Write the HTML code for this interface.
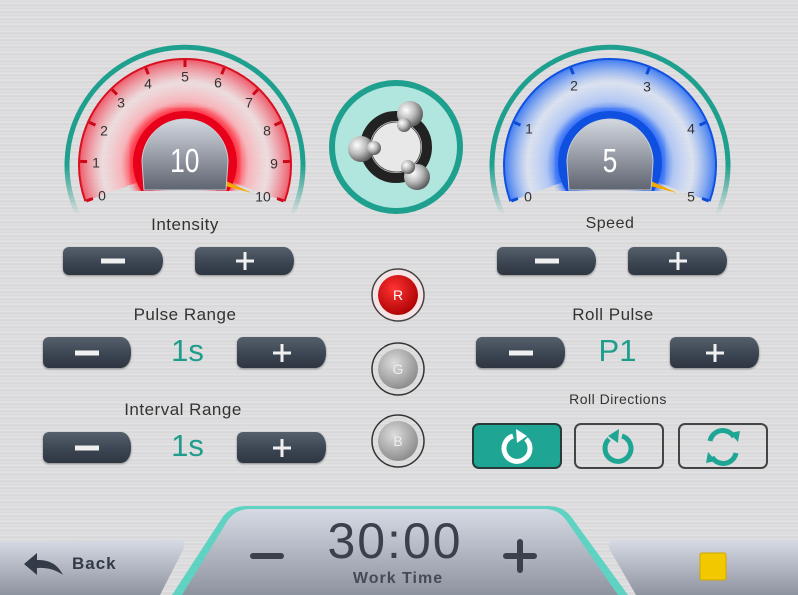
<!DOCTYPE html>
<html><head><meta charset="utf-8"><style>
*{margin:0;padding:0;box-sizing:border-box}
body{width:798px;height:595px;overflow:hidden;position:relative;font-family:"Liberation Sans",sans-serif;
background:repeating-linear-gradient(180deg,#e2e2e3 0px,#d8d8da 2px,#e6e6e7 3px,#d6d6d8 5px,#dfdfe0 7px);}
.btn{position:absolute;background:linear-gradient(#56606c,#3a4350 60%,#2e3641);border-radius:6px 10px 10px 6px/6px 14px 14px 6px;box-shadow:0 1px 2px rgba(0,0,0,.4);}
.btn span{position:absolute;left:50%;top:50%;background:#f0f0f0;transform:translate(-50%,-50%);}
.lbl{position:absolute;color:#333;font-size:17px;text-align:center;letter-spacing:.5px}
.val{position:absolute;color:#1f9d8c;font-size:31px;text-align:center}
.rd{position:absolute;width:90px;height:46px;border:2px solid #444;border-radius:7px}
</style></head><body>

<svg width="798" height="595" style="position:absolute;left:0;top:0">
<defs>
<radialGradient id="rg" cx="185" cy="165" r="106" gradientUnits="userSpaceOnUse">
<stop offset="0.45" stop-color="#ff2030"/><stop offset="0.6" stop-color="#f6b4ba"/><stop offset="0.78" stop-color="#f2dcdd" stop-opacity=".7"/><stop offset="1" stop-color="#ee5868"/></radialGradient>
<radialGradient id="bg2" cx="610" cy="165" r="106" gradientUnits="userSpaceOnUse">
<stop offset="0.45" stop-color="#1a5ee8"/><stop offset="0.6" stop-color="#b0c6f4"/><stop offset="0.78" stop-color="#dae3f5" stop-opacity=".7"/><stop offset="1" stop-color="#3d7af0"/></radialGradient>
<linearGradient id="dome" x1="0" y1="0" x2="0" y2="1"><stop offset="0" stop-color="#d4d8e0"/><stop offset="1" stop-color="#5e6470"/></linearGradient>
<linearGradient id="tf" x1="0" y1="0" x2="0" y2="1"><stop offset="0.7" stop-color="#1fa08e"/><stop offset="1" stop-color="#1fa08e" stop-opacity="0"/></linearGradient>
<radialGradient id="ball" cx="0.35" cy="0.35" r="0.7"><stop offset="0" stop-color="#fff"/><stop offset="0.5" stop-color="#bbb"/><stop offset="1" stop-color="#555"/></radialGradient>
<radialGradient id="redb" cx="0.4" cy="0.35" r="0.7"><stop offset="0" stop-color="#f33"/><stop offset="1" stop-color="#a00"/></radialGradient>
<radialGradient id="grb" cx="0.4" cy="0.35" r="0.7"><stop offset="0" stop-color="#ddd"/><stop offset="1" stop-color="#888"/></radialGradient>
<filter id="bl"><feGaussianBlur stdDeviation="4"/></filter>
<clipPath id="cl"><rect x="0" y="0" width="798" height="191"/></clipPath>
</defs>

<!-- Left gauge -->
<g>
<path d="M185,165 L85.4,201.3 A106,106 0 1 1 284.6,201.3 Z" fill="url(#rg)"/>
<path d="M85.4,201.3 A106,106 0 1 1 284.6,201.3" fill="none" stroke="#d81020" stroke-width="2"/>
<path d="M78,215 A118,118 0 1 1 292,215" fill="none" stroke="url(#tf)" stroke-width="5"/>
<g stroke="#cc0818" stroke-width="3">
<line x1="185" y1="60" x2="185" y2="67" transform="rotate(-110 185 165)"/>
<line x1="185" y1="60" x2="185" y2="67" transform="rotate(-88 185 165)"/>
<line x1="185" y1="60" x2="185" y2="67" transform="rotate(-66 185 165)"/>
<line x1="185" y1="60" x2="185" y2="67" transform="rotate(-44 185 165)"/>
<line x1="185" y1="60" x2="185" y2="67" transform="rotate(-22 185 165)"/>
<line x1="185" y1="60" x2="185" y2="67"/>
<line x1="185" y1="60" x2="185" y2="67" transform="rotate(22 185 165)"/>
<line x1="185" y1="60" x2="185" y2="67" transform="rotate(44 185 165)"/>
<line x1="185" y1="60" x2="185" y2="67" transform="rotate(66 185 165)"/>
<line x1="185" y1="60" x2="185" y2="67" transform="rotate(88 185 165)"/>
<line x1="185" y1="60" x2="185" y2="67" transform="rotate(110 185 165)"/>
</g>
<g font-size="14" fill="#333" text-anchor="middle" dominant-baseline="middle">
<text x="102" y="197">0</text><text x="96" y="164">1</text><text x="104" y="132">2</text><text x="121" y="104">3</text><text x="148" y="85">4</text><text x="185" y="78">5</text><text x="218" y="84">6</text><text x="249" y="104">7</text><text x="267" y="132">8</text><text x="274" y="165">9</text><text x="263" y="198">10</text>
</g>
<g clip-path="url(#cl)">
<circle cx="185" cy="163" r="46" fill="none" stroke="#ff3545" stroke-width="18" filter="url(#bl)"/>
<circle cx="185" cy="163" r="47" fill="none" stroke="#e8001a" stroke-width="10"/>
</g>
<path d="M226,181 L252,193 L225,186Z" fill="#f5a800"/>
<path d="M142,162 A43,43 0 0 1 228,162 L226,190 L144,190 Z" fill="url(#dome)" stroke="#c8ccd4" stroke-width="1"/>
<text x="185" y="172" font-size="33" fill="#fff" text-anchor="middle" transform="scale(0.8 1) translate(46 0)">10</text>
</g>

<!-- Right gauge -->
<g>
<path d="M610,165 L510.4,201.3 A106,106 0 1 1 709.6,201.3 Z" fill="url(#bg2)"/>
<path d="M510.4,201.3 A106,106 0 1 1 709.6,201.3" fill="none" stroke="#1050e0" stroke-width="2"/>
<path d="M503,215 A118,118 0 1 1 717,215" fill="none" stroke="url(#tf)" stroke-width="5"/>
<g stroke="#0c4ad8" stroke-width="3">
<line x1="610" y1="60" x2="610" y2="67" transform="rotate(-110 610 165)"/>
<line x1="610" y1="60" x2="610" y2="67" transform="rotate(-66 610 165)"/>
<line x1="610" y1="60" x2="610" y2="67" transform="rotate(-22 610 165)"/>
<line x1="610" y1="60" x2="610" y2="67" transform="rotate(22 610 165)"/>
<line x1="610" y1="60" x2="610" y2="67" transform="rotate(66 610 165)"/>
<line x1="610" y1="60" x2="610" y2="67" transform="rotate(110 610 165)"/>
</g>
<g font-size="14" fill="#333" text-anchor="middle" dominant-baseline="middle">
<text x="528" y="198">0</text><text x="529" y="130">1</text><text x="574" y="87">2</text><text x="647" y="88">3</text><text x="691" y="130">4</text><text x="691" y="198">5</text>
</g>
<g clip-path="url(#cl)">
<circle cx="610" cy="163" r="46" fill="none" stroke="#3070ff" stroke-width="18" filter="url(#bl)"/>
<circle cx="610" cy="163" r="47" fill="none" stroke="#1050e0" stroke-width="10"/>
</g>
<path d="M651,181 L677,193 L650,186Z" fill="#f5a800"/>
<path d="M567,162 A43,43 0 0 1 653,162 L651,190 L569,190 Z" fill="url(#dome)" stroke="#c8ccd4"/>
<text x="610" y="172" font-size="33" fill="#fff" text-anchor="middle" transform="scale(0.8 1) translate(152.5 0)">5</text>
</g>

<!-- molecule -->
<circle cx="396" cy="147" r="64" fill="#b0e6de" stroke="#1fa08e" stroke-width="6"/>
<circle cx="396" cy="147" r="31" fill="#e8e8e8" stroke="#222" stroke-width="10"/>
<circle cx="396" cy="147" r="25" fill="none" stroke="#555" stroke-width="1"/>
<circle cx="410" cy="114" r="13" fill="url(#ball)"/><circle cx="404" cy="125" r="7" fill="url(#ball)"/>
<circle cx="361" cy="149" r="13" fill="url(#ball)"/><circle cx="374" cy="148" r="7" fill="url(#ball)"/>
<circle cx="417" cy="177" r="13" fill="url(#ball)"/><circle cx="408" cy="167" r="7" fill="url(#ball)"/>

<!-- RGB -->
<circle cx="398" cy="295" r="26" fill="#f4e4e6" stroke="#444" stroke-width="1.5"/>
<circle cx="398" cy="295" r="20" fill="url(#redb)"/>
<text x="398" y="300" font-size="14" fill="#fff" text-anchor="middle">R</text>
<circle cx="398" cy="369" r="26" fill="none" stroke="#333" stroke-width="1.5"/>
<circle cx="398" cy="369" r="20" fill="url(#grb)"/>
<text x="398" y="374" font-size="14" fill="#eee" text-anchor="middle">G</text>
<circle cx="398" cy="441" r="26" fill="none" stroke="#333" stroke-width="1.5"/>
<circle cx="398" cy="441" r="20" fill="url(#grb)"/>
<text x="398" y="446" font-size="14" fill="#eee" text-anchor="middle">B</text>

<!-- bottom -->
<defs><linearGradient id="pn" x1="0" y1="0" x2="0" y2="1"><stop offset="0" stop-color="#d6dae4"/><stop offset="1" stop-color="#8e93a0"/></linearGradient></defs>
<path d="M0,542 L176,540 Q188,540 183,550 L160,595 L0,595Z" fill="url(#pn)"/>
<path d="M610,550 Q605,540 618,540 L798,540 L798,595 L636,595Z" fill="url(#pn)"/>
<path d="M172,595 L222,518 Q230,506 246,506 L548,506 Q564,506 572,518 L628,595Z" fill="#40d0bc" opacity=".8"/>
<path d="M182,595 L228,520 Q236,509 250,509 L544,509 Q558,509 566,520 L618,595Z" fill="url(#pn)"/>
<path d="M24,564 L37,553 L37,560 Q55,559 63,575 Q52,567 37,568 L37,575 Z" fill="#333a48"/>
<rect x="700" y="553" width="26" height="27" rx="2" fill="#f2c800" stroke="#d0a800"/>
</svg>

<div class="lbl" style="left:100px;top:215px;width:170px">Intensity</div>
<div class="lbl" style="left:525px;top:215px;width:170px;font-size:16px">Speed</div>
<div class="lbl" style="left:100px;top:305px;width:170px">Pulse Range</div>
<div class="lbl" style="left:98px;top:400px;width:170px">Interval Range</div>
<div class="lbl" style="left:528px;top:305px;width:170px">Roll Pulse</div>
<div class="lbl" style="left:533px;top:391px;width:170px;font-size:14px">Roll Directions</div>

<div class="btn" style="left:63px;top:247px;width:100px;height:28px"><span style="width:24px;height:5px"></span></div>
<div class="btn" style="left:195px;top:247px;width:99px;height:28px"><span style="width:18px;height:3px"></span><span style="width:3px;height:18px"></span></div>
<div class="btn" style="left:497px;top:247px;width:99px;height:28px"><span style="width:24px;height:5px"></span></div>
<div class="btn" style="left:628px;top:247px;width:99px;height:28px"><span style="width:18px;height:3px"></span><span style="width:3px;height:18px"></span></div>

<div class="btn" style="left:43px;top:337px;width:88px;height:31px"><span style="width:24px;height:5px"></span></div>
<div class="val" style="left:150px;top:333px;width:75px">1s</div>
<div class="btn" style="left:237px;top:337px;width:89px;height:31px"><span style="width:18px;height:3px"></span><span style="width:3px;height:18px"></span></div>
<div class="btn" style="left:43px;top:432px;width:88px;height:31px"><span style="width:24px;height:5px"></span></div>
<div class="val" style="left:150px;top:428px;width:75px">1s</div>
<div class="btn" style="left:237px;top:432px;width:89px;height:31px"><span style="width:18px;height:3px"></span><span style="width:3px;height:18px"></span></div>

<div class="btn" style="left:476px;top:337px;width:89px;height:31px"><span style="width:24px;height:5px"></span></div>
<div class="val" style="left:580px;top:333px;width:75px">P1</div>
<div class="btn" style="left:670px;top:337px;width:89px;height:31px"><span style="width:18px;height:3px"></span><span style="width:3px;height:18px"></span></div>

<div class="rd" style="left:472px;top:423px;background:#1fa594;border-color:#2a3a3a"></div>
<div class="rd" style="left:574px;top:423px"></div>
<div class="rd" style="left:678px;top:423px"></div>
<svg width="798" height="595" style="position:absolute;left:0;top:0">
<g fill="none" stroke-width="5">
<path d="M526,439 A13,13 0 1 1 513,436" stroke="#fff"/>
<path d="M516,429 L527,436 L517,443Z" fill="#fff" stroke="none"/>
<path d="M609,439 A13,13 0 1 0 622,436" stroke="#1fa594"/>
<path d="M619,429 L608,436 L618,443Z" fill="#1fa594" stroke="none"/>
<path d="M710,441 A13,13 0 0 1 734,437" stroke="#1fa594"/>
<path d="M736,453 A13,13 0 0 1 712,457" stroke="#1fa594"/>
<path d="M730,433 L740,431 L738,442Z" fill="#1fa594" stroke="none"/>
<path d="M716,461 L706,463 L708,452Z" fill="#1fa594" stroke="none"/>
</g>
</svg>

<div style="position:absolute;left:72px;top:554px;font-size:17px;font-weight:bold;color:#333a48;letter-spacing:1px">Back</div>
<div style="position:absolute;left:250px;top:553px;width:34px;height:6px;background:#3a404c;border-radius:3px"></div>
<div style="position:absolute;left:503px;top:553px;width:34px;height:6px;background:#3a404c;border-radius:3px"></div>
<div style="position:absolute;left:517px;top:539px;width:6px;height:34px;background:#3a404c;border-radius:3px"></div>
<div style="position:absolute;left:300px;top:512px;width:190px;text-align:center;font-size:50px;color:#3a404c;letter-spacing:2px">30:00</div>
<div style="position:absolute;left:300px;top:570px;width:196px;text-align:center;font-size:16px;font-weight:bold;color:#444a56;letter-spacing:1px">Work Time</div>
</body></html>
